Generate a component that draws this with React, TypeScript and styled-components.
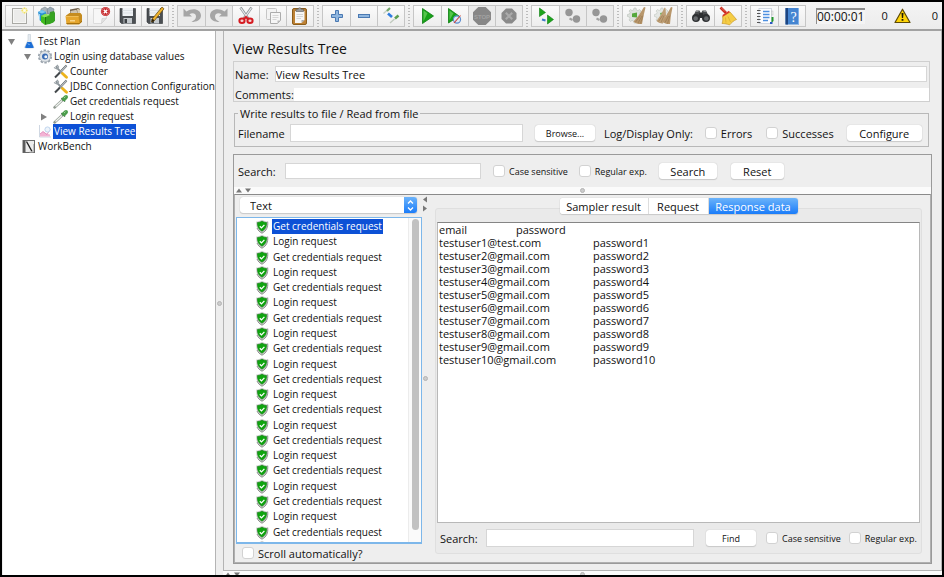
import React from 'react';
import styled, { createGlobalStyle, css } from 'styled-components';

const font = '"Open Sans", "Noto Sans", sans-serif';

const GlobalStyle = createGlobalStyle`
  *, *::before, *::after { box-sizing: border-box; }
  body { margin: 0; background: #000; }
  body, button, input, select, textarea { font-family: ${font}; color: #111; }
`;

/* ---------- window frame ---------- */

const Window = styled.div`
  display: flex;
  flex-direction: column;
  height: 100vh;
  border: 2px solid #000;
  background: #eee;
  font-size: 11px;
  line-height: 15px;
  overflow: hidden;
`;

const Toolbar = styled.header`
  display: flex;
  align-items: center;
  flex: none;
  height: 29px;
  padding: 0 3px;
  background: linear-gradient(#f4f4f4, #ececec);
  border-bottom: 2px solid #a2a2a2;
`;

const ToolGroup = styled.div`
  display: flex;
  border: 1px solid #c6c6c6;
  height: 22px;
`;

const ToolButton = styled.button`
  display: grid;
  place-items: center;
  width: 27px;
  padding: 0;
  border: 0;
  background: linear-gradient(#fbfbfb, #ededed);
  & + & { border-left: 1px solid #c6c6c6; }
  &:disabled { background: #ebebeb; }
`;

const Grip = styled.span`
  width: 2px;
  height: 22px;
  margin: 0 3px;
  background: repeating-linear-gradient(#bcbcbc 0 1px, transparent 1px 3px);
`;

const Timer = styled.output`
  margin-left: 10px;
  width: 49px;
  height: 16px;
  border: solid #8c8c8c;
  border-width: 2px 0 0 1px;
  background: #f4f4f4;
  font-size: 12px;
  line-height: 14px;
  white-space: nowrap;
`;

const Status = styled.div`
  display: flex;
  flex: 1;
  align-items: center;
  justify-content: flex-end;
  gap: 6px;
  padding-right: 1px;
`;

const ThreadCount = styled.span`
  margin-left: 15px;
`;

const Body = styled.div`
  display: grid;
  flex: 1;
  min-height: 0;
  grid-template-columns: 214px 7px minmax(0, 1fr);
`;

/* ---------- test plan tree ---------- */

const PlanTree = styled.nav`
  margin-left: 1px;
  padding-top: 3px;
  background: #fff;
  border: solid #b4b4b4;
  border-width: 0 1px 0 0;
  overflow: hidden;
`;

const TreeRow = styled.div<{ $level: number }>`
  display: flex;
  align-items: center;
  height: 15px;
  padding-left: ${p => 3 + p.$level * 16}px;
  font-size: 10px;
  white-space: nowrap;
`;

const Disclosure = styled.svg`
  flex: none;
  width: 12px;
  height: 12px;
  margin-right: 3px;
`;

const TreeIcon = styled.svg`
  flex: none;
  width: 16px;
  height: 15px;
`;

const Label = styled.span<{ $selected?: boolean }>`
  padding: 0 1px;
  height: 15px;
  ${p => p.$selected && css`
    background: #0d51d6;
    color: #fff;
  `}
`;

/* ---------- splitters ---------- */

const VerticalSplit = styled.div`
  display: grid;
  grid-template-rows: 1fr auto 1fr;
  justify-items: center;
  overflow: hidden;
`;

const HorizontalSplit = styled.div`
  display: grid;
  flex: none;
  grid-template-columns: 1fr auto 1fr;
  align-items: center;
  height: 7px;
  padding: 0 2px;
  background: #fbfbfb;
  overflow: hidden;
`;

const Knob = styled.span`
  width: 5px;
  height: 5px;
  border-radius: 50%;
  border: 1px solid #b4b4b4;
  background: #ccc;
`;

const SplitArrows = styled.svg`
  display: block;
`;

/* ---------- right pane ---------- */

const Main = styled.main`
  display: flex;
  flex-direction: column;
  min-width: 0;
  min-height: 0;
  overflow: hidden;
`;

const Editor = styled.section`
  display: flex;
  flex: 1;
  flex-direction: column;
  min-height: 0;
  padding: 8px 9px 6px;
  border: solid #b4b4b4;
  border-width: 0 1px 1px;
`;

const Title = styled.h1`
  margin: 0 0 2px;
  font-size: 14px;
  line-height: 20px;
  font-weight: 400;
`;

const NameBox = styled.div`
  display: flex;
  flex-direction: column;
  gap: 6px;
  margin-right: 2px;
  padding-top: 4px;
  border: 1px solid #cfcfcf;
`;

const FormRow = styled.label<{ $inset?: boolean }>`
  display: flex;
  align-items: center;
  gap: ${p => (p.$inset ? 6 : 0)}px;
  height: ${p => (p.$inset ? 16 : 13)}px;
  padding: 0 ${p => (p.$inset ? 2 : 0)}px 0 1px;
`;

const TextInput = styled.input<{ $width?: number; $height?: number; $plain?: boolean }>`
  flex: ${p => (p.$width ? `0 1 ${p.$width}px` : '1')};
  min-width: 0;
  height: ${p => p.$height ?? 16}px;
  padding: 0;
  border: ${p => (p.$plain ? '0' : '1px solid #d6d6d6')};
  border-radius: 0;
  background: #fff;
  font-size: 11px;
  outline: none;
`;

const FileGroup = styled.fieldset`
  min-width: 0;
  margin: 4px 3px 0 1px;
  padding: 3px 6px 4px 3px;
  border: 1px solid #b8b8b8;
`;

const Legend = styled.legend`
  padding: 0 2px;
  line-height: 15px;
`;

const Bar = styled.div<{ $height: number }>`
  display: flex;
  flex: none;
  align-items: center;
  height: ${p => p.$height}px;
  white-space: nowrap;
`;

const FieldLabel = styled.label<{ $width: number; $indent?: number }>`
  flex: none;
  width: ${p => p.$width}px;
  padding-left: ${p => p.$indent ?? 0}px;
`;

const Caption = styled.span`
  flex: none;
  margin-left: 9px;
`;

const Button = styled.button<{ $width: number; $gap: number; $small?: boolean }>`
  flex: none;
  width: ${p => p.$width}px;
  height: 16px;
  margin-left: ${p => p.$gap}px;
  padding: 0;
  border: 0;
  border-radius: 3px;
  background: #fff;
  box-shadow: 0 0 1px #aaa, 0 1px 1px #ccc;
  font-size: ${p => (p.$small ? 9 : 11)}px;
  line-height: 15px;
`;

const CheckLabel = styled.label<{ $gap: number; $small?: boolean }>`
  display: flex;
  flex: none;
  align-items: center;
  gap: 4px;
  margin-left: ${p => p.$gap}px;
  font-size: ${p => (p.$small ? 9 : 11)}px;
`;

const Checkbox = styled.input.attrs({ type: 'checkbox' })`
  appearance: none;
  width: 12px;
  height: 12px;
  margin: 0;
  border-radius: 3px;
  border: 1px solid #d2d2d2;
  background: #fff;
  &:checked { background: #2d8cfa; }
`;

const Results = styled.section`
  display: flex;
  flex: 1;
  flex-direction: column;
  min-height: 0;
  margin-top: 7px;
  border: 1px solid #9a9a9a;
`;

const ResultsBody = styled.div`
  display: grid;
  flex: 1;
  min-height: 0;
  grid-template-columns: 187px 6px minmax(0, 1fr);
  border: 1px solid #b0b0b0;
  border-top-color: #8a8a8a;
`;

const SamplePane = styled.div`
  display: flex;
  flex-direction: column;
  min-height: 0;
  padding-top: 2px;
`;

const SelectWrap = styled.div`
  display: grid;
  flex: none;
  grid-template-columns: 1fr 13px;
  height: 16px;
  margin: 0 5px 4px 5px;
  border-radius: 3px;
  background: #fff;
  box-shadow: 0 0 1px #aaa, 0 1px 1px #ccc;
  overflow: hidden;
`;

const Renderer = styled.select`
  appearance: none;
  grid-area: 1 / 1 / 2 / 3;
  padding: 0 10px;
  border: 0;
  background: transparent;
  font-size: 11px;
  outline: none;
`;

const SelectCap = styled.span`
  display: grid;
  grid-area: 1 / 2;
  place-items: center;
  background: linear-gradient(#6bb3fa, #1a7cf9);
  pointer-events: none;
`;

const SampleBox = styled.div`
  display: grid;
  flex: 1;
  min-height: 0;
  grid-template: minmax(0, 1fr) / minmax(0, 1fr) 13px;
  margin-left: 1px;
  border: 1px solid #7db7ea;
  border-bottom-width: 2px;
  background: #fff;
  overflow: hidden;
`;

const SampleList = styled.ul`
  display: grid;
  grid-template-rows: repeat(22, minmax(0, 1fr));
  margin: 0 0 -13px;
  padding: 1px 0 0 18px;
  list-style: none;
  font-size: 10px;
`;

const Sample = styled.li`
  display: flex;
  align-items: center;
  gap: 3px;
  white-space: nowrap;
`;

const ScrollTrack = styled.div`
  display: flex;
  justify-content: center;
  padding: 1px 0 12px;
  border-left: 1px solid #ececec;
  background: #fafafa;
`;

const ScrollThumb = styled.div`
  width: 7px;
  border-radius: 4px;
  background: #c1c1c1;
`;

const ResponsePane = styled.div`
  display: flex;
  flex-direction: column;
  min-width: 0;
  min-height: 0;
  padding: 3px 8px 8px 7px;
`;

const Tabs = styled.div`
  display: flex;
  flex: none;
  align-self: center;
  z-index: 1;
  height: 16px;
  margin-bottom: -6px;
  border-radius: 3px;
  background: #fff;
  box-shadow: 0 0 1px #aaa, 0 1px 1px #ccc;
  overflow: hidden;
`;

const Tab = styled.button<{ $width: number; $active?: boolean }>`
  width: ${p => p.$width}px;
  padding: 0;
  border: 0;
  background: #fff;
  font-size: 11px;
  line-height: 15px;
  & + & { border-left: 1px solid #ddd; }
  ${p => p.$active && css`
    background: linear-gradient(#6bb3fa, #1a7cf9);
    color: #fff;
  `}
`;

const TabPanel = styled.div`
  display: flex;
  flex: 1;
  flex-direction: column;
  min-height: 0;
  padding: 13px 1px 0;
  border: 1px solid #dfdfdf;
  border-radius: 3px;
  background: #eaeaea;
`;

const Response = styled.textarea`
  flex: 1;
  min-height: 0;
  margin: 0;
  padding: 0 1px;
  border: 1px solid #b8b8b8;
  border-top-color: #858585;
  background: #fff;
  font-size: 11px;
  line-height: 13px;
  white-space: pre;
  tab-size: 77px;
  resize: none;
  outline: none;
  overflow: hidden;
`;

const BottomSplit = styled(HorizontalSplit)`
  height: 4px;
  align-items: start;
  padding-top: 1px;
`;

/* ---------- icons ---------- */

const Svg = ({ children }: { children: React.ReactNode }) => (
  <svg width="20" height="20" viewBox="0 0 20 20" aria-hidden="true">{children}</svg>
);

const Page = () => (
  <Svg>
    <rect x="2.500" y="2.500" width="14" height="15" fill="#f6f6f4" stroke="#a9a9a5" />
    <rect x="4" y="4" width="11" height="12" fill="#ebebea" />
    <circle cx="14.500" cy="4.500" r="3" fill="#f5eda6" />
    <path d="M14.500 1.500v6M11.500 4.500h6" stroke="#f0dc50" strokeWidth=".8" />
    <circle cx="14.500" cy="4.500" r="1.400" fill="#fffde8" />
  </Svg>
);

const Templates = () => (
  <Svg>
    <path d="M4 3l4-2 3 2v5H4z" fill="#a9b3ba" stroke="#78848c" strokeWidth=".6" />
    <path d="M10 3.500l3-2.500 4 2-1 5h-5z" fill="#9babb7" stroke="#6b7a86" strokeWidth=".6" />
    <path d="M1 6l4-2 4 2-1 8-5 1z" fill="#2a8fd2" />
    <path d="M1 6l4 1.500 4-1.500-4-2z" fill="#7cc8f2" />
    <path d="M13 6l4-1 1 2v8l-3 2-3-2z" fill="#3a9b2a" />
    <path d="M4 10l4-2 5 2v7l-5 2-4-3z" fill="#3fbb1d" />
    <path d="M9 10.500L13 8l4-1v9l-4 2-4 .5z" fill="#36a521" />
    <path d="M4 10l4 1.500 5-2.500-5-1z" fill="#8be35c" />
    <path d="M8.500 11v7.500" stroke="#1e7511" />
    <path d="M2.500 8v5" stroke="#9bd6f7" />
  </Svg>
);

const OpenFile = () => (
  <Svg>
    <path d="M6 3.500l8-1.500 2 1v8H6z" fill="#6f5f4a" />
    <path d="M6.500 5l6-1.200L14 9H6.500z" fill="#cfc5b2" />
    <path d="M13 3l3 .5V10h-2z" fill="#d9cdb4" />
    <path d="M2 9.500L5.500 7h11L18 9v7l-3 2.500H3z" fill="#c58c1f" />
    <path d="M1.500 10h13l1 8h-13z" fill="#e5a62e" />
    <path d="M2 10.500h12.500" stroke="#f0be58" />
    <path d="M2.500 17.500h13L18 15" fill="none" stroke="#a6720f" />
    <path d="M6 14h5v1.500H6z" fill="#f6d48a" />
  </Svg>
);

const CloseFile = () => (
  <Svg>
    <path d="M2.500 2.500h13V12l-5 5.500h-8z" fill="#f7f7f7" stroke="#dcdcdc" />
    <path d="M15.500 12l-5 5.500.5-5z" fill="#e4e4e4" stroke="#cacaca" strokeWidth=".6" />
    <circle cx="14.500" cy="5.500" r="4.600" fill="#c42326" />
    <circle cx="14.500" cy="5.500" r="3.700" fill="none" stroke="#e08a8a" strokeWidth=".6" />
    <path d="M12.800 3.800l3.400 3.400m0-3.400l-3.400 3.400" stroke="#fff" strokeWidth="1.500" />
  </Svg>
);

const Floppy = () => (
  <>
    <path d="M2 2.500h15.500v15H3.500L2 16z" fill="#4b4f53" stroke="#2d3032" strokeWidth=".6" />
    <rect x="4.500" y="2" width="10.500" height="8" fill="#eef1f4" />
    <path d="M4.500 4.500h10.500M4.500 7h10.500" stroke="#d2d8dd" strokeWidth=".7" />
    <rect x="5.500" y="12" width="8.500" height="5.500" fill="#c4c9cd" />
    <rect x="6.500" y="13" width="2.500" height="4" fill="#3c4043" />
  </>
);

const Save = () => <Svg><Floppy /></Svg>;

const SaveAs = () => (
  <Svg>
    <Floppy />
    <path d="M17 1l2 1.800L9.500 14.500 6.500 16l1-3.500z" fill="#eeb22c" stroke="#5c4410" strokeWidth=".7" />
    <path d="M7.500 12.500l2 2-3 1.500z" fill="#2b1e08" />
  </Svg>
);

const undoPath = 'M1.500 2.500v8h8.500L7.500 8.200C10 6.500 14 7 14 10.500c0 2.500-2 4-4.500 5.500C14.500 16 19 14 19 9.500c0-6-8-8.500-14.500-4z';

const Undo = () => <Svg><path d={undoPath} fill="#a6a6a6" /></Svg>;
const Redo = () => <Svg><g transform="matrix(-1 0 0 1 20 0)"><path d={undoPath} fill="#a6a6a6" /></g></Svg>;

const Cut = () => (
  <Svg>
    <path d="M4.500 1.500L12.500 13M15.500 1.500L7.500 13" stroke="#8f9598" strokeWidth="2.600" />
    <path d="M4.700 2L12 12.500M15.300 2L8 12.500" stroke="#e9ecee" strokeWidth="1.200" />
    <ellipse cx="6" cy="14.800" rx="2.600" ry="2.300" fill="#f3d6d6" stroke="#d51c22" strokeWidth="2" />
    <ellipse cx="14" cy="14.800" rx="2.600" ry="2.300" fill="#f3d6d6" stroke="#d51c22" strokeWidth="2" />
    <path d="M8 13l2-2 2 2" fill="none" stroke="#d51c22" strokeWidth="2" />
  </Svg>
);

const Copy = () => (
  <Svg>
    <rect x="3.500" y="2.500" width="10" height="11" rx="1" fill="#f3f3f3" stroke="#c6c6c6" />
    <path d="M7.500 6.500h10v8l-3 3h-7z" fill="#f6f6f6" stroke="#acacac" />
    <path d="M9.500 9.500h6m-6 2h6m-6 2h4" stroke="#cecece" strokeWidth=".8" />
    <path d="M17.500 14.500h-3v3z" fill="#bbb" />
  </Svg>
);

const Paste = () => (
  <Svg>
    <rect x="2.500" y="2.500" width="14" height="16" rx="1.500" fill="#bd8134" stroke="#8b5d1c" />
    <path d="M5 5h9.500v9l-3 3H5z" fill="#f7f7f5" />
    <path d="M14.500 14h-3v3z" fill="#aaa" />
    <path d="M6.500 8.500h6.500m-6.500 2h6.500m-6.500 2h4.500" stroke="#cbcbcb" strokeWidth=".8" />
    <path d="M6 5.500V3.200h2.200a1.500 1.500 0 013 0h2.300v2.300z" fill="#9b9b9b" stroke="#5e5e5e" strokeWidth=".6" />
  </Svg>
);

const Plus = () => (
  <Svg><path d="M8.500 4.500h3v4h4v3h-4v4h-3v-4h-4v-3h4z" fill="#8fb6df" stroke="#4a79b2" /></Svg>
);
const Minus = () => (
  <Svg><rect x="4.500" y="8.500" width="11" height="3" fill="#8fb6df" stroke="#4a79b2" /></Svg>
);

const Toggle = () => (
  <Svg>
    <path d="M2.500 7.500L8 2.500" stroke="#c6cfc4" strokeWidth="1.400" />
    <path d="M6 5l3-3" stroke="#73a86b" strokeWidth="2.200" />
    <path d="M7 7.500l4 3.500" stroke="#2e7ce0" strokeWidth="2.600" />
    <path d="M17.500 9.500l-3.500 3" stroke="#5d9f52" strokeWidth="2.600" />
    <path d="M13.500 13L9 17" stroke="#c0c9be" strokeWidth="1.400" />
  </Svg>
);

const Run = () => (
  <Svg>
    <path d="M4.500 2.500L15.500 10l-11 7.500z" fill="#17a218" stroke="#0c7d10" strokeWidth=".8" />
    <path d="M5.500 4.500l4 2.700-4 8z" fill="#55c44c" />
  </Svg>
);

const RunNoPause = () => (
  <Svg>
    <path d="M3.500 2.500L14 10l-10.500 7z" fill="#17a218" stroke="#0c7d10" strokeWidth=".8" />
    <path d="M4.500 4.500l4 2.700-4 7z" fill="#55c44c" />
    <circle cx="12" cy="13.500" r="3.600" fill="#dfe9f6" stroke="#5b8dcf" strokeWidth="1.100" />
    <path d="M9 17l6.500-7.500" stroke="#d0403a" strokeWidth="1.100" />
  </Svg>
);

const octagon = 'M6.300 1h7.400L19 6.300v7.400L13.700 19H6.300L1 13.700V6.300z';

const Stop = () => (
  <Svg>
    <path d={octagon} fill="#878787" />
    <text x="10" y="12.500" fontSize="6" fontFamily="Liberation Sans, sans-serif" fontWeight="700" textAnchor="middle" fill="#a2a2a2">STOP</text>
  </Svg>
);

const Shutdown = () => (
  <Svg>
    <path d="M7 2.500h6l4.500 4.500v6L13 17.500H7L2.500 13V7z" fill="#8a8a8a" />
    <path d="M6.800 6.800l6.400 6.400m0-6.400l-6.400 6.400" stroke="#aaa" strokeWidth="2.200" />
  </Svg>
);

const RemoteStart = () => (
  <Svg>
    <path d="M3.500 2l6 4.500-6 4z" fill="#1ba31b" stroke="#0c7d10" strokeWidth=".6" />
    <path d="M11.500 9l6 4.500-6 4.500z" fill="#1ba31b" stroke="#0c7d10" strokeWidth=".6" />
    <path d="M6 13.500l3.500 1" stroke="#3c78c8" strokeWidth="2" />
  </Svg>
);

const RemoteOff = () => (
  <Svg>
    <circle cx="6" cy="6.500" r="3.700" fill="#969696" />
    <circle cx="13.500" cy="13" r="3.700" fill="#969696" />
    <path d="M6.500 12.500l3 1.500" stroke="#a2a2a2" strokeWidth="2" />
  </Svg>
);

const gearTeeth = 'M7 2h2l.4 2 1.500.6L12.500 3.500 14 5l-1 1.700.5 1.300 2 .5v2l-2 .5-.6 1.500L14 14l-1.500 1.500-1.700-1-1.300.5L9 17H7l-.5-2-1.500-.6-1.500 1.100L2 14l1-1.700L2.500 11l-2-.5v-2l2-.5.6-1.500L2 5l1.500-1.500L5 4.500 6.500 4z';

const Clear = () => (
  <Svg>
    <path d={gearTeeth} fill="#dde1dd" stroke="#bfc5bf" strokeWidth=".7" />
    <path d="M5 7.500l5-1v5l-5-.5z" fill="#55a83c" />
    <path d="M18.500 1.500l-1.500-.5-5 8-5.500 6.500c2 2 5 2.800 8.500 2.500l1.500-8z" fill="#b8976c" />
    <path d="M8.500 16l5-6.500M11 17l4-7M13.500 17.500l2.500-8" stroke="#94744b" strokeWidth=".6" />
  </Svg>
);

const ClearAll = () => (
  <Svg>
    <path d={gearTeeth} fill="#e4e7e4" stroke="#c6cbc6" strokeWidth=".7" />
    <path d="M6 7l5-1v4l-4 .5z" fill="#6fae57" />
    <path d="M11.500 2l-.8-.5-4 7.500-4.200 6c1.500 1.700 4 2.500 6.500 2.500l3-8z" fill="#bfa077" />
    <path d="M18.500 1.500L17 1l-4.500 8-4 6.500c2 2 4.500 2.800 7.500 2.500l.8-8z" fill="#b8976c" />
    <path d="M4.500 15.500l4-6M7 16.500l3-7M11 16.500l3.500-6.500M13.500 17.500l2.500-8" stroke="#94744b" strokeWidth=".6" />
  </Svg>
);

const Search = () => (
  <Svg>
    <path d="M5 4.500h3.500l1 2h1l1-2H15l3 6H2z" fill="#4a4c4e" />
    <rect x="8" y="7" width="4" height="5" fill="#2e3032" />
    <circle cx="5" cy="12" r="4" fill="#2e3032" />
    <circle cx="15" cy="12" r="4" fill="#2e3032" />
    <circle cx="4.700" cy="12.500" r="2.300" fill="#66696c" />
    <circle cx="15.300" cy="12.500" r="2.300" fill="#66696c" />
    <path d="M5 5.500h2.500M12.500 5.500H15" stroke="#8b8e90" />
  </Svg>
);

const ResetSearch = () => (
  <Svg>
    <path d="M2.500 1.500L8 7" stroke="#c9281c" strokeWidth="2.600" />
    <path d="M3 1.500l4 4" stroke="#f1917f" strokeWidth=".7" />
    <path d="M4.500 10.500L12 6l6.500 7.500c-2 .5-5.500 3.500-7 5.500-2-1-5-1.500-7.500-1.500 1-2 1-5 .5-7z" fill="#f5cd45" stroke="#c7982a" strokeWidth=".7" />
    <path d="M4.500 9L11 4.700l.8 1.500-7 4.500z" fill="#d93a25" />
    <path d="M7.500 11.500l.5 5M10 10.500l2.500 5.500" stroke="#dba92b" strokeWidth=".7" />
  </Svg>
);

const FunctionHelper = () => (
  <Svg>
    <rect x="4" y="2.500" width="12.500" height="15" fill="#fcfdff" stroke="#c0c9d6" strokeWidth=".7" />
    <path d="M2 4.500h3.500m-3.500 3h3.500m-3.500 3h3.500m-3.500 3h3.500m-3.500 3h3.500" stroke="#555" strokeWidth="1" />
    <path d="M8 5.500h6.500M8 8.500h6.500M8 11.500h6.500M8 14.500h5" stroke="#4d90e0" strokeWidth="1.300" />
    <rect x="16.500" y="5" width="1.500" height="4" fill="#eee" stroke="#b2b2b2" strokeWidth=".4" />
    <path d="M16.500 11h2v4l-2 2z" fill="#23972b" />
    <path d="M15 16h2.500v2H15z" fill="#2b59c3" />
  </Svg>
);

const Help = () => (
  <Svg>
    <rect x="3.500" y="2" width="13.500" height="16.500" fill="#4585d1" />
    <rect x="3.500" y="2" width="2.500" height="16.500" fill="#1c4480" />
    <path d="M16.500 2v16.500" stroke="#7fb1ea" />
    <text x="11.500" y="15.500" fontSize="14" fontFamily="Liberation Serif, serif" textAnchor="middle" fill="#fff">?</text>
  </Svg>
);

const Warning = () => (
  <svg width="17" height="16" viewBox="0 0 17 16" aria-label="Warnings">
    <path d="M8.500 1.200L16 14.500H1z" fill="#fdd307" stroke="#5d4a06" strokeWidth="1.200" strokeLinejoin="round" />
    <path d="M7.500 5h2l-.4 5H7.900zM7.600 11h1.800v1.800H7.600z" fill="#1d1a08" />
  </svg>
);

const FlaskIcon = () => (
  <TreeIcon viewBox="0 0 16 15">
    <path d="M7 .5h2.500V6l3.500 7.500c0 .8-9 .8-9.500 0L7 6z" fill="#e4eaf0" stroke="#c3ccd5" strokeWidth=".6" />
    <path d="M6.300 8h4l2.500 5.500c0 .8-8.300.8-8.800 0z" fill="#1d6fd6" />
    <path d="M7 9.500l1.500 1.500" stroke="#9cc8fa" />
  </TreeIcon>
);

const GearIcon = () => (
  <TreeIcon viewBox="0 0 16 15">
    <circle cx="8" cy="7.500" r="6.200" fill="none" stroke="#9aa3ac" strokeWidth="1.800" strokeDasharray="2.400 1.470" />
    <circle cx="8" cy="7.500" r="5.500" fill="#dfe3e7" stroke="#9aa3ac" strokeWidth=".7" />
    <circle cx="8" cy="7.500" r="3" fill="#3a6cb4" />
    <circle cx="8.800" cy="7.800" r="1.500" fill="#f2f6fb" />
  </TreeIcon>
);

const ToolsIcon = () => (
  <TreeIcon viewBox="0 0 16 15">
    <path d="M13.500 1.500L5 10.500 2 13.500" stroke="#43484b" strokeWidth="2" />
    <path d="M13.500 1.500L7 8.500" stroke="#b9bfc3" strokeWidth="1.300" />
    <path d="M3 2l1.500 2.500 8.500 8.500" fill="none" stroke="#8c959a" strokeWidth="1.800" />
    <path d="M1 3.500l3 1.500L5.500 3 4 .8" fill="none" stroke="#9aa2a7" strokeWidth="1.300" />
    <path d="M9.500 9.500l4 3.800" stroke="#edb41c" strokeWidth="2.800" strokeLinecap="round" />
  </TreeIcon>
);

const PipetteIcon = () => (
  <TreeIcon viewBox="0 0 16 15">
    <path d="M1.500 13.500L9.500 6" stroke="#8f988f" strokeWidth="2.400" strokeLinecap="round" />
    <path d="M2.500 12.500L9 6.500" stroke="#f2f5f2" strokeWidth="1.200" />
    <path d="M8.500 4L12 7.500" stroke="#3c6e41" strokeWidth="1.600" />
    <path d="M11 5l2-2" stroke="#4b9d4c" strokeWidth="4" strokeLinecap="round" />
    <path d="M11 4l1.500-1.300" stroke="#a2daa0" strokeWidth="1" />
  </TreeIcon>
);

const ChartIcon = () => (
  <TreeIcon viewBox="0 0 16 15">
    <path d="M2.500 1v12H14" fill="none" stroke="#c3cddb" strokeWidth=".8" />
    <path d="M3 12.500V10l3-2.500 3 2 4 1v2z" fill="#f3b3d4" />
    <path d="M3 10l3-2.500 4 3 3-5" fill="none" stroke="#dd84b7" strokeWidth=".8" />
    <circle cx="10.500" cy="5.500" r="2.600" fill="#eef4fb" stroke="#b3cbe8" strokeWidth=".8" />
  </TreeIcon>
);

const BenchIcon = () => (
  <TreeIcon viewBox="0 0 16 15">
    <rect x="2" y="1.500" width="11.500" height="12" fill="#ededed" stroke="#6b6b6b" />
    <rect x="2" y="1.500" width="2.500" height="12" fill="#5c5c5c" />
    <path d="M5.500 2.500l5.500 10" stroke="#222" strokeWidth="1.400" />
    <path d="M12.500 5v8h-4" fill="none" stroke="#bdbdbd" />
  </TreeIcon>
);

const Shield = () => (
  <svg width="14" height="15" viewBox="0 0 14 15" aria-hidden="true">
    <path d="M7 .8C8.800 2 10.800 2.600 12.700 2.600c.5 5.500-1.200 9.400-5.700 11.600C2.500 12 .8 8.100 1.300 2.600 3.200 2.600 5.200 2 7 .8z" fill="#cbcdcb" />
    <path d="M12.700 2.600c.5 5.500-1.200 9.400-5.700 11.600C4.500 13 2.900 11.300 2 9" fill="none" stroke="#858985" strokeWidth=".9" />
    <path d="M7 2.300c1.500.8 3 1.200 4.600 1.300.1 4-1.200 6.900-4.600 8.600-3.400-1.700-4.700-4.600-4.600-8.600C4 3.500 5.500 3.100 7 2.300z" fill="#0fa40f" stroke="#0b7f0d" strokeWidth=".6" />
    <path d="M4.800 7.200l1.700 1.700 2.900-3" fill="none" stroke="#fff" strokeWidth="1.300" />
  </svg>
);

/* ---------- data ---------- */

type Tool = { name: string; icon: React.FC; disabled?: boolean };

const toolGroups: Tool[][] = [
  [
    { name: 'New', icon: Page },
    { name: 'Templates', icon: Templates },
    { name: 'Open', icon: OpenFile },
    { name: 'Close', icon: CloseFile },
    { name: 'Save', icon: Save },
    { name: 'Save as', icon: SaveAs },
  ],
  [
    { name: 'Undo', icon: Undo, disabled: true },
    { name: 'Redo', icon: Redo, disabled: true },
    { name: 'Cut', icon: Cut },
    { name: 'Copy', icon: Copy },
    { name: 'Paste', icon: Paste },
  ],
  [
    { name: 'Expand all', icon: Plus },
    { name: 'Collapse all', icon: Minus },
    { name: 'Toggle', icon: Toggle },
  ],
  [
    { name: 'Start', icon: Run },
    { name: 'Start no pauses', icon: RunNoPause },
    { name: 'Stop', icon: Stop, disabled: true },
    { name: 'Shutdown', icon: Shutdown, disabled: true },
  ],
  [
    { name: 'Remote start all', icon: RemoteStart },
    { name: 'Remote stop all', icon: RemoteOff, disabled: true },
    { name: 'Remote shutdown all', icon: RemoteOff, disabled: true },
  ],
  [
    { name: 'Clear', icon: Clear },
    { name: 'Clear all', icon: ClearAll },
  ],
  [
    { name: 'Search tree', icon: Search },
    { name: 'Reset search', icon: ResetSearch },
  ],
  [
    { name: 'Function helper', icon: FunctionHelper },
    { name: 'Help', icon: Help },
  ],
];

type Node = { text: string; level: number; icon: React.FC; state?: 'open' | 'closed'; selected?: boolean };

const planNodes: Node[] = [
  { text: 'Test Plan', level: 0, icon: FlaskIcon, state: 'open' },
  { text: 'Login using database values', level: 1, icon: GearIcon, state: 'open' },
  { text: 'Counter', level: 2, icon: ToolsIcon },
  { text: 'JDBC Connection Configuration', level: 2, icon: ToolsIcon },
  { text: 'Get credentials request', level: 2, icon: PipetteIcon },
  { text: 'Login request', level: 2, icon: PipetteIcon, state: 'closed' },
  { text: 'View Results Tree', level: 1, icon: ChartIcon, selected: true },
  { text: 'WorkBench', level: 0, icon: BenchIcon },
];

const samples = Array.from({ length: 21 }, (_, i) => (i % 2 ? 'Login request' : 'Get credentials request'));

const response = [
  'email\tpassword',
  'testuser1@test.com\tpassword1',
  ...Array.from({ length: 9 }, (_, i) => `testuser${i + 2}@gmail.com\tpassword${i + 2}`),
].join('\n');

/* ---------- small pieces ---------- */

const Check = ({ text, gap, small }: { text: string; gap: number; small?: boolean }) => (
  <CheckLabel $gap={gap} $small={small}>
    <Checkbox />
    {text}
  </CheckLabel>
);

const DisclosureMark = ({ state }: { state?: 'open' | 'closed' }) => (
  <Disclosure viewBox="0 0 12 12" aria-hidden="true">
    {state === 'open' && <path d="M2 3h7l-3.500 6z" fill="#808080" />}
    {state === 'closed' && <path d="M3 2.500l6 3.500-6 3.500z" fill="#808080" />}
  </Disclosure>
);

const UpDown = () => (
  <SplitArrows width="16" height="5" viewBox="0 0 16 5" aria-hidden="true">
    <path d="M0 4.500h6L3 .5zM9 .5h6l-3 4z" fill="#777" />
  </SplitArrows>
);

const LeftRight = () => (
  <SplitArrows width="6" height="18" viewBox="0 0 6 18" aria-hidden="true">
    <path d="M5 1.500v6l-4-3zM1 10.500v6l4-3z" fill="#777" />
  </SplitArrows>
);

export default function App() {
  return (
    <Window>
      <GlobalStyle />
      <Toolbar>
        {toolGroups.map((group, index) => (
          <React.Fragment key={group[0].name}>
            {index > 0 && <Grip />}
            <ToolGroup>
              {group.map(({ name, icon: Icon, disabled }) => (
                <ToolButton key={name} aria-label={name} disabled={disabled}>
                  <Icon />
                </ToolButton>
              ))}
            </ToolGroup>
          </React.Fragment>
        ))}
        <Timer>00:00:01</Timer>
        <Status>
          <span>0</span>
          <Warning />
          <ThreadCount>0</ThreadCount>
        </Status>
      </Toolbar>

      <Body>
        <PlanTree>
          {planNodes.map(({ text, level, icon: Icon, state, selected }) => (
            <TreeRow key={text} $level={level}>
              <DisclosureMark state={state} />
              <Icon />
              <Label $selected={selected}>{text}</Label>
            </TreeRow>
          ))}
        </PlanTree>

        <VerticalSplit>
          <span />
          <Knob />
        </VerticalSplit>

        <Main>
          <Editor>
            <Title>View Results Tree</Title>

            <NameBox>
              <FormRow $inset>
                Name:
                <TextInput defaultValue="View Results Tree" />
              </FormRow>
              <FormRow>
                Comments:
                <TextInput $height={13} $plain />
              </FormRow>
            </NameBox>

            <FileGroup>
              <Legend>Write results to file / Read from file</Legend>
              <Bar $height={18}>
                <FieldLabel $width={52} htmlFor="filename">Filename</FieldLabel>
                <TextInput id="filename" $width={233} $height={18} />
                <Button $width={60} $gap={12} $small>Browse...</Button>
                <Caption>Log/Display Only:</Caption>
                <Check text="Errors" gap={12} />
                <Check text="Successes" gap={14} />
                <Button $width={75} $gap={13}>Configure</Button>
              </Bar>
            </FileGroup>

            <Results>
              <Bar $height={32}>
                <FieldLabel $width={51} $indent={4} htmlFor="search">Search:</FieldLabel>
                <TextInput id="search" $width={196} />
                <Check text="Case sensitive" gap={12} small />
                <Check text="Regular exp." gap={11} small />
                <Button $width={58} $gap={12}>Search</Button>
                <Button $width={53} $gap={14}>Reset</Button>
              </Bar>
              <HorizontalSplit>
                <UpDown />
                <Knob />
              </HorizontalSplit>

              <ResultsBody>
                <SamplePane>
                  <SelectWrap>
                    <SelectCap>
                      <svg width="9" height="13" viewBox="0 0 9 13" aria-hidden="true">
                        <path d="M2 4.500L4.500 2 7 4.500M2 8.500L4.500 11 7 8.500" fill="none" stroke="#fff" strokeWidth="1.300" />
                      </svg>
                    </SelectCap>
                    <Renderer aria-label="Renderer">
                      <option>Text</option>
                    </Renderer>
                  </SelectWrap>
                  <SampleBox>
                    <SampleList>
                      {samples.map((text, i) => (
                        <Sample key={i}>
                          <Shield />
                          <Label $selected={i === 0}>{text}</Label>
                        </Sample>
                      ))}
                      <Sample aria-hidden="true">
                        <Shield />
                      </Sample>
                    </SampleList>
                    <ScrollTrack>
                      <ScrollThumb />
                    </ScrollTrack>
                  </SampleBox>
                  <Bar $height={18}>
                    <Check text="Scroll automatically?" gap={7} />
                  </Bar>
                </SamplePane>

                <VerticalSplit>
                  <LeftRight />
                  <Knob />
                </VerticalSplit>

                <ResponsePane>
                  <Tabs role="tablist">
                    <Tab role="tab" $width={88}>Sampler result</Tab>
                    <Tab role="tab" $width={60}>Request</Tab>
                    <Tab role="tab" $width={90} $active aria-selected>Response data</Tab>
                  </Tabs>
                  <TabPanel role="tabpanel">
                    <Response aria-label="Response data" readOnly value={response} />
                    <Bar $height={30}>
                      <FieldLabel $width={49} $indent={3} htmlFor="find">Search:</FieldLabel>
                      <TextInput id="find" $width={208} $height={18} />
                      <Button $width={50} $gap={12} $small>Find</Button>
                      <Check text="Case sensitive" gap={10} small />
                      <Check text="Regular exp." gap={8} small />
                    </Bar>
                  </TabPanel>
                </ResponsePane>
              </ResultsBody>
            </Results>
          </Editor>
          <BottomSplit>
            <UpDown />
            <Knob />
          </BottomSplit>
        </Main>
      </Body>
    </Window>
  );
}
